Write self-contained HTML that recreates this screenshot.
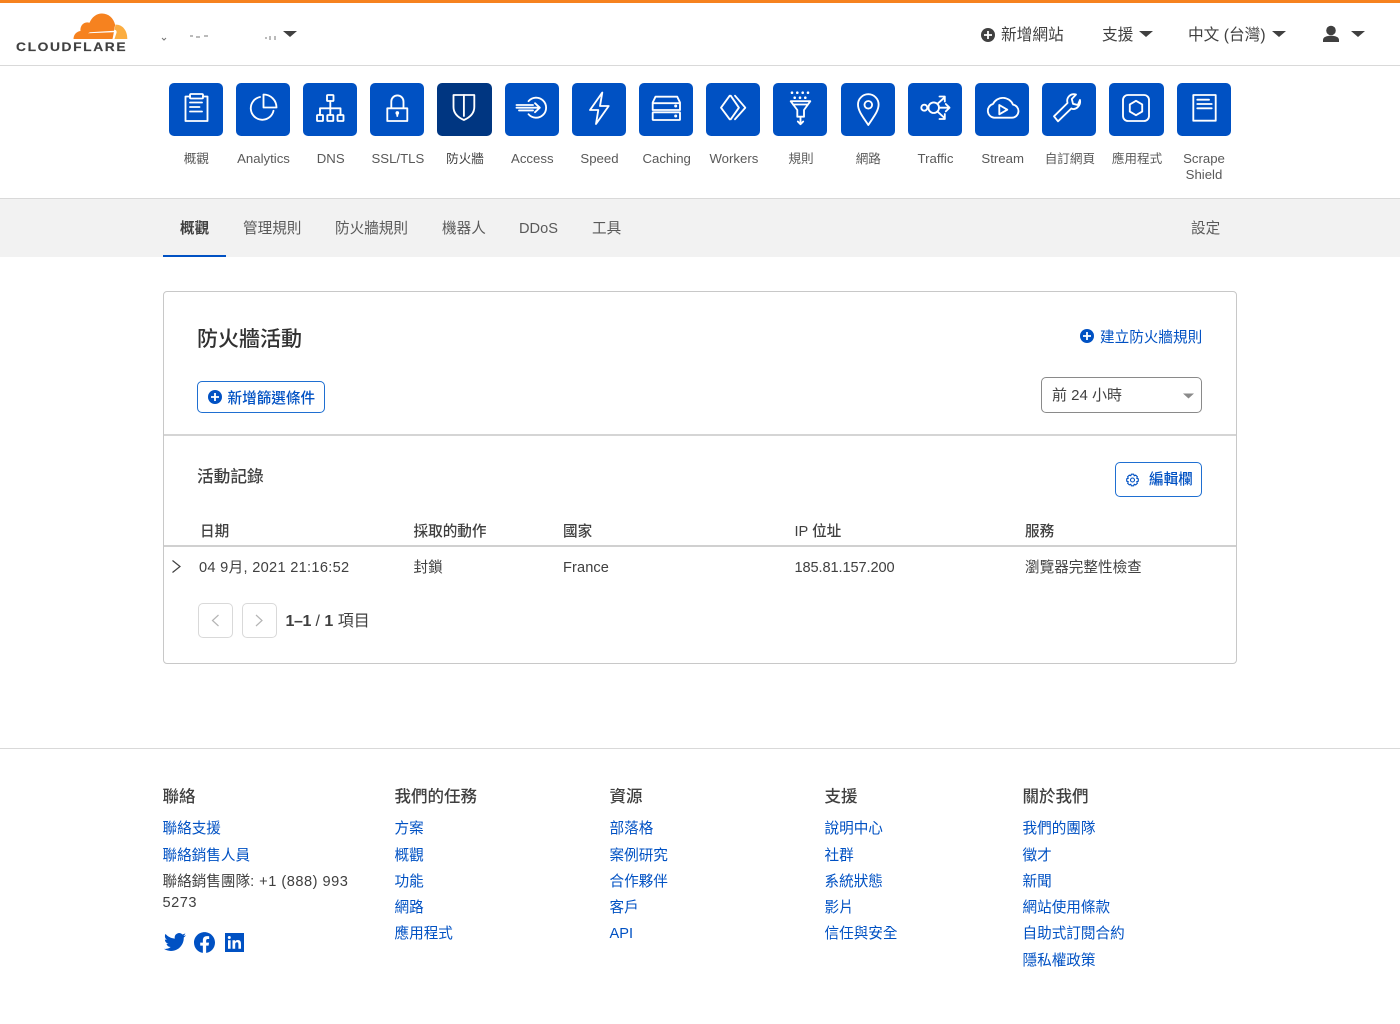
<!DOCTYPE html>
<html lang="zh-Hant"><head><meta charset="utf-8"><title>Cloudflare</title>
<style>
html,body{margin:0;padding:0;background:#fff}
body{position:relative;width:1400px;height:1024px;overflow:hidden;font-family:"Liberation Sans","Noto Sans CJK TC",sans-serif;color:#404040;font-size:14.6px}
.t{position:absolute;white-space:nowrap;line-height:20px}
.b{position:absolute}
.blue{color:#0051c3}
.tile{position:absolute;top:83px;width:54px;height:53px;border-radius:5px;background:#0051c3}
.tile svg{position:absolute;left:0;top:0;width:54.5px;height:53px;fill:none;stroke:#fff;stroke-width:1.85;stroke-linejoin:round;stroke-linecap:round}
.lab{position:absolute;top:151px;width:70px;text-align:center;font-size:12.6px;line-height:16px;color:#595959}
.lat{font-size:13.2px}
.nav{top:219px;color:#595959;font-size:14.6px}
.th{top:522px;font-weight:500;color:#404040}
.td{top:558px;color:#404040}
.h{top:787px;font-size:16.5px;font-weight:500;color:#404040;margin-left:-.5px}
.f{color:#0051c3;margin-left:-.5px}
svg{overflow:visible}
</style></head><body>
<div class="b" style="left:0;top:0;width:1400px;height:3px;background:#f6821f"></div>
<div class="b" style="left:0;top:65px;width:1400px;height:1px;background:#d9d9d9"></div>

<svg class="b" style="left:0;top:0" width="1400" height="66">
<path fill="#f6821f" d="M73.500 39C73.600 34.500 76.500 31.500 80.500 31C79.800 26 83.800 21 89.500 22.800C92 17 96.500 13.500 102 13.500C108.500 13.500 113.500 18 115.200 25C114 29 114 33 112.500 39Z"/>
<path fill="#fbad41" d="M114.500 39L116.600 32.500C116.800 31 116 30 114.500 29.800L115.500 24.600C122 24.200 127.500 30 127.300 39Z"/>
<path fill="#fff" d="M88 33.200L113 32.200L115 31.800C115.700 31.400 115.600 30.800 114.500 30.800L90 32.300Z"/>
<path fill="#404040" d="M283 31H297L290 37Z"/>
<path fill="#404040" d="M1139 31H1153L1146 37ZM1272 31H1286L1279 37ZM1351 31H1365L1358 37Z"/>
<circle cx="988" cy="35" r="7" fill="#404040"/><path d="M984 35H992M988 31V39" stroke="#fff" stroke-width="1.800"/>
<circle cx="1331" cy="30.500" r="4.800" fill="#404040"/><path fill="#404040" d="M1323 42V40C1323 37 1327 35.800 1331 35.800C1335 35.800 1339 37 1339 40V42Z"/>
<path d="M162 38l2 2 2-2M190 36h3M196 37h4M204 36h4M265 38h2M270 40v-4M275 40v-4" stroke="#777" stroke-width="1" fill="none"/>
</svg>
<div class="t" style="left:16px;top:37px;font-weight:700;font-size:12px;letter-spacing:1.400px;color:#404040;transform:scaleX(1.15);transform-origin:0 0;-webkit-text-stroke:.15px #404040">CLOUDFLARE</div>
<div class="t" style="left:1001px;top:26px;font-size:15.700px">新增網站</div>
<div class="t" style="left:1102px;top:26px;font-size:15.700px">支援</div>
<div class="t" style="left:1188px;top:26px;font-size:15.700px">中文 (台灣)</div>

<div class="tile" style="left:169px"><svg><path d="M21 13.500H16.500V38H38.500V13.500H34"/><rect x="21" y="11" width="13" height="4.500" rx="1"/><path d="M21 19.500H33M21 24H30.500M21 28.500H33"/></svg></div>
<div class="tile" style="left:236px"><svg><path d="M27.500 11.500V24.500H40.500A13 13 0 0 0 27.500 11.500Z"/><path d="M24 14A11.500 11.500 0 1 0 37.500 27.800"/></svg></div>
<div class="tile" style="left:303px"><svg><rect x="24" y="12" width="6.500" height="6" rx=".8"/><rect x="14" y="32" width="6" height="6" rx=".8"/><rect x="24.300" y="32" width="6" height="6" rx=".8"/><rect x="34.500" y="32" width="6" height="6" rx=".8"/><path d="M27.300 18V32M17 32V25.300H37.500V32"/></svg></div>
<div class="tile" style="left:370px"><svg><rect x="17.300" y="25.300" width="20" height="12.700"/><path d="M21.300 25V18.500A6.100 6.100 0 0 1 33.500 18.500V25"/><circle cx="27.300" cy="30" r=".9" fill="#fff"/><path d="M27.300 30V33"/></svg></div>
<div class="tile" style="left:437px;width:55px;background:#003681"><svg><path d="M16.500 12H37.300V24C37.300 31 31.500 35 26.900 37C22.300 35 16.500 31 16.500 24Z"/><path d="M26.900 12V33"/></svg></div>
<div class="tile" style="left:505px"><svg><path d="M23.500 18.200A10 10 0 1 1 23.500 31.200"/><path d="M11.500 22H28M11.500 24.700H34.500M14 27.400H28M30 20.200L34.800 24.700L30 29.200"/></svg></div>
<div class="tile" style="left:572px"><svg><path d="M30.300 9.500L18 27H26.300L24 41L36.700 23H28Z"/></svg></div>
<div class="tile" style="left:639px"><svg><path d="M13.700 19.500L16.500 13.700H38.200L41 19.500V27H13.700ZM13.700 20.200H41"/><rect x="13.700" y="29.300" width="27.300" height="7.700" rx=".6"/><circle cx="36.700" cy="23" r=".6" fill="#fff"/><circle cx="36.700" cy="33" r=".6" fill="#fff"/></svg></div>
<div class="tile" style="left:706px"><svg><path d="M23.700 12.700L15 24.700L23.700 36.300M24.700 12.700L32.900 24.700L24.700 36.300M29 12.700L39.300 24.700L29 36.300"/></svg></div>
<div class="tile" style="left:773px"><svg><g fill="#fff" stroke="none"><circle cx="19" cy="9.700" r="1.300"/><circle cx="24.300" cy="9.700" r="1.300"/><circle cx="29.700" cy="9.700" r="1.300"/><circle cx="35" cy="9.700" r="1.300"/><circle cx="21.700" cy="14.700" r="1.300"/><circle cx="27" cy="14.700" r="1.300"/><circle cx="32.300" cy="14.700" r="1.300"/></g><path d="M17.700 18.200H37.300L31 27V33.700H24.300V27ZM20 21.500H35M27.500 34V41M24.800 38.500L27.500 41.200L30.200 38.500"/></svg></div>
<div class="tile" style="left:841px"><svg><path d="M27.300 42C22 34 17 28 17 21.500A10.300 10.300 0 0 1 37.600 21.500C37.600 28 32.500 34 27.300 42Z"/><circle cx="27.300" cy="21.800" r="3.800"/></svg></div>
<div class="tile" style="left:908px"><svg><circle cx="16.300" cy="24.700" r="3"/><circle cx="25.700" cy="24.700" r="5.300"/><path d="M19.300 24.700H20.400M31 24.700H41.500M37.800 21L41.500 24.700L37.800 28.400M29.500 20.800L36.500 14.500M31.500 13.500H36.800V18.500M29.500 28.600L36.500 35M31.500 36H36.800V31"/></svg></div>
<div class="tile" style="left:975px"><svg><path d="M19 34.700H37A6.600 6.600 0 0 0 38 21.600A11 11 0 0 0 18 21A7 7 0 0 0 19 34.700Z"/><path d="M24.300 22V31.300L32.300 26.700Z"/></svg></div>
<div class="tile" style="left:1042px"><svg><path d="M12 33.300L25.500 20C24 14.500 28.500 10 34 11.500L29.800 16L31 20.800L35.800 22L38 17C39 22.500 34 27.500 29.300 25.500L16 38.300Z"/></svg></div>
<div class="tile" style="left:1109px;width:55px"><svg><rect x="14" y="12" width="26" height="26" rx="5"/><path d="M27 17.800L33.200 21.400V28.600L27 32.200L20.800 28.600V21.400Z"/></svg></div>
<div class="tile" style="left:1177px"><svg><rect x="16.300" y="12" width="22.400" height="25.700"/><path d="M20.300 16.700H32M20.300 21H34.700M20.300 25.300H34.700"/></svg></div>

<div class="lab" style="left:161.300px">概觀</div>
<div class="lab lat" style="left:228.500px">Analytics</div>
<div class="lab lat" style="left:295.700px">DNS</div>
<div class="lab lat" style="left:362.900px">SSL/TLS</div>
<div class="lab" style="left:430px;color:#404040">防火牆</div>
<div class="lab lat" style="left:497.300px">Access</div>
<div class="lab lat" style="left:564.500px">Speed</div>
<div class="lab lat" style="left:631.700px">Caching</div>
<div class="lab lat" style="left:698.900px">Workers</div>
<div class="lab" style="left:766px">規則</div>
<div class="lab" style="left:833.300px">網路</div>
<div class="lab lat" style="left:900.500px">Traffic</div>
<div class="lab lat" style="left:967.700px">Stream</div>
<div class="lab" style="left:1034.900px">自訂網頁</div>
<div class="lab" style="left:1102px">應用程式</div>
<div class="lab lat" style="left:1169px">Scrape<br>Shield</div>

<div class="b" style="left:0;top:198px;width:1400px;height:59px;background:#f2f2f2;border-top:1px solid #d9d9d9;box-sizing:border-box"></div>
<div class="b" style="left:163px;top:255px;width:63px;height:2px;background:#0051c3"></div>
<div class="t nav" style="left:180px;font-weight:700;color:#404040">概觀</div>
<div class="t nav" style="left:243px">管理規則</div>
<div class="t nav" style="left:335px">防火牆規則</div>
<div class="t nav" style="left:442px">機器人</div>
<div class="t nav" style="left:519px">DDoS</div>
<div class="t nav" style="left:592px">工具</div>
<div class="t nav" style="left:1191px">設定</div>

<div class="b" style="left:163px;top:291px;width:1074px;height:373px;box-sizing:border-box;border:1px solid #c8c8c8;border-radius:4px"></div>
<div class="b" style="left:164px;top:434px;width:1072px;height:2px;background:#d5d5d5"></div>
<div class="b" style="left:164px;top:545px;width:1072px;height:2px;background:#d0d0d0"></div>

<div class="t" style="left:197px;top:330px;font-size:21px;font-weight:500;color:#313131">防火牆活動</div>
<svg class="b" style="left:0;top:0" width="1400" height="700">
<g fill="#0051c3"><circle cx="215" cy="397" r="7"/><circle cx="1087" cy="336" r="7"/></g>
<path d="M211 397H219M215 393V401M1083 336H1091M1087 332V340" stroke="#fff" stroke-width="1.800"/>
<path fill="#8a8a8a" d="M1183 393.500H1194L1188.500 398.500Z"/>
<g fill="none" stroke="#0051c3" stroke-width="1.100" transform="translate(1132.500 480)"><circle r="2"/><path d="M-1.200 -5.800H1.200L1.700 -4.200L3.200 -4.900L4.900 -3.200L4.200 -1.700L5.800 -1.200V1.200L4.200 1.700L4.900 3.200L3.200 4.900L1.700 4.200L1.200 5.800H-1.200L-1.700 4.200L-3.200 4.900L-4.900 3.200L-4.200 1.700L-5.800 1.200V-1.200L-4.200 -1.700L-4.900 -3.200L-3.200 -4.900L-1.700 -4.200Z" stroke-linejoin="round"/></g>
<path d="M172.500 560.500L180 566.500L172.500 572.500" fill="none" stroke="#404040" stroke-width="1.200"/>
<path d="M218.500 615L212.500 620.500L218.500 626M256 615L262 620.500L256 626" fill="none" stroke="#b5b5b5" stroke-width="1.200"/>
</svg>
<div class="t blue" style="left:1100px;top:328px">建立防火牆規則</div>
<div class="b" style="left:197px;top:381px;width:128px;height:32px;box-sizing:border-box;border:1px solid #1f6fd1;border-radius:5px"></div>
<div class="t blue" style="left:227.500px;top:389px;font-weight:500">新增篩選條件</div>
<div class="b" style="left:1041px;top:377px;width:161px;height:36px;box-sizing:border-box;border:1px solid #8a8a8a;border-radius:5px"></div>
<div class="t" style="left:1052px;top:386px;font-size:15px">前 24 小時</div>

<div class="t" style="left:197px;top:467px;font-size:16.700px;font-weight:500;color:#404040">活動記錄</div>
<div class="b" style="left:1115px;top:462px;width:87px;height:35px;box-sizing:border-box;border:1px solid #1f6fd1;border-radius:5px"></div>
<div class="t blue" style="left:1149px;top:470px;font-weight:500">編輯欄</div>

<div class="t th" style="left:200px">日期</div>
<div class="t th" style="left:413.500px">採取的動作</div>
<div class="t th" style="left:563px">國家</div>
<div class="t th" style="left:794.500px">IP 位址</div>
<div class="t th" style="left:1025px">服務</div>
<div class="t td" style="left:199px;letter-spacing:.3px">04 9月, 2021 21:16:52</div>
<div class="t td" style="left:413.500px">封鎖</div>
<div class="t td" style="left:563px;letter-spacing:.1px">France</div>
<div class="t td" style="left:794.500px;letter-spacing:-.1px">185.81.157.200</div>
<div class="t td" style="left:1025px">瀏覽器完整性檢查</div>

<div class="b" style="left:198px;top:603px;width:35px;height:35px;box-sizing:border-box;border:1px solid #d9d9d9;border-radius:5px"></div>
<div class="b" style="left:242px;top:603px;width:35px;height:35px;box-sizing:border-box;border:1px solid #d9d9d9;border-radius:5px"></div>
<div class="t" style="left:285.500px;top:612px;font-size:16px"><b style="font-weight:700;letter-spacing:-.4px">1–1</b> / <b style="font-weight:700">1</b> 項目</div>

<div class="b" style="left:0;top:748px;width:1400px;height:1px;background:#d9d9d9"></div>
<div class="t h" style="left:163px">聯絡</div>
<div class="t h" style="left:395px">我們的任務</div>
<div class="t h" style="left:610px">資源</div>
<div class="t h" style="left:825px">支援</div>
<div class="t h" style="left:1023px">關於我們</div>

<div class="t f" style="left:163px;top:819px">聯絡支援</div>
<div class="t f" style="left:163px;top:846px">聯絡銷售人員</div>
<div class="t" style="left:162.500px;top:872px">聯絡銷售團隊<span style="letter-spacing:.5px">: +1 (888) 993</span></div>
<div class="t" style="left:162.500px;top:893px;letter-spacing:.5px">5273</div>

<div class="t f" style="left:395px;top:819px">方案</div>
<div class="t f" style="left:395px;top:846px">概觀</div>
<div class="t f" style="left:395px;top:872px">功能</div>
<div class="t f" style="left:395px;top:898px">網路</div>
<div class="t f" style="left:395px;top:924px">應用程式</div>

<div class="t f" style="left:610px;top:819px">部落格</div>
<div class="t f" style="left:610px;top:846px">案例研究</div>
<div class="t f" style="left:610px;top:872px">合作夥伴</div>
<div class="t f" style="left:610px;top:898px">客戶</div>
<div class="t f" style="left:610px;top:924px">API</div>

<div class="t f" style="left:825px;top:819px">說明中心</div>
<div class="t f" style="left:825px;top:846px">社群</div>
<div class="t f" style="left:825px;top:872px">系統狀態</div>
<div class="t f" style="left:825px;top:898px">影片</div>
<div class="t f" style="left:825px;top:924px">信任與安全</div>

<div class="t f" style="left:1023px;top:819px">我們的團隊</div>
<div class="t f" style="left:1023px;top:846px">徵才</div>
<div class="t f" style="left:1023px;top:872px">新聞</div>
<div class="t f" style="left:1023px;top:898px">網站使用條款</div>
<div class="t f" style="left:1023px;top:924px">自助式訂閱合約</div>
<div class="t f" style="left:1023px;top:951px">隱私權政策</div>

<svg class="b" style="left:164px;top:931px" width="22" height="22" viewBox="0 0 24 24" fill="#0051c3"><path d="M23.953 4.57a10 10 0 01-2.825.775 4.958 4.958 0 002.163-2.723c-.951.555-2.005.959-3.127 1.184a4.92 4.92 0 00-8.384 4.482C7.69 8.095 4.067 6.13 1.64 3.162a4.822 4.822 0 00-.666 2.475c0 1.71.87 3.213 2.188 4.096a4.904 4.904 0 01-2.228-.616v.06a4.923 4.923 0 003.946 4.827 4.996 4.996 0 01-2.212.085 4.936 4.936 0 004.604 3.417 9.867 9.867 0 01-6.102 2.105c-.39 0-.779-.023-1.17-.067a13.995 13.995 0 007.557 2.209c9.053 0 13.998-7.496 13.998-13.985 0-.21 0-.42-.015-.63A9.935 9.935 0 0024 4.59z"/></svg>
<svg class="b" style="left:194px;top:931.500px" width="21" height="21" viewBox="0 0 24 24" fill="#0051c3"><path d="M24 12.073c0-6.627-5.373-12-12-12s-12 5.373-12 12c0 5.99 4.388 10.954 10.125 11.854v-8.385H7.078v-3.47h3.047V9.43c0-3.007 1.792-4.669 4.533-4.669 1.312 0 2.686.235 2.686.235v2.953H15.83c-1.491 0-1.956.925-1.956 1.874v2.25h3.328l-.532 3.47h-2.796v8.385C19.612 23.027 24 18.062 24 12.073z"/></svg>
<svg class="b" style="left:224.500px;top:933px" width="19" height="19" viewBox="0 0 19 19"><rect width="19" height="19" fill="#0051c3"/><path fill="#fff" d="M3 7.200H5.600V15.800H3ZM4.300 3A1.500 1.500 0 1 1 4.300 6 1.500 1.500 0 0 1 4.300 3ZM7.500 7.200H10V8.400C10.500 7.500 11.500 7 12.700 7C15.200 7 16 8.500 16 10.800V15.800H13.400V11.400C13.400 10.300 13.200 9.300 12 9.300C10.700 9.300 10.200 10.200 10.200 11.400V15.800H7.500Z"/></svg>
</body></html>
